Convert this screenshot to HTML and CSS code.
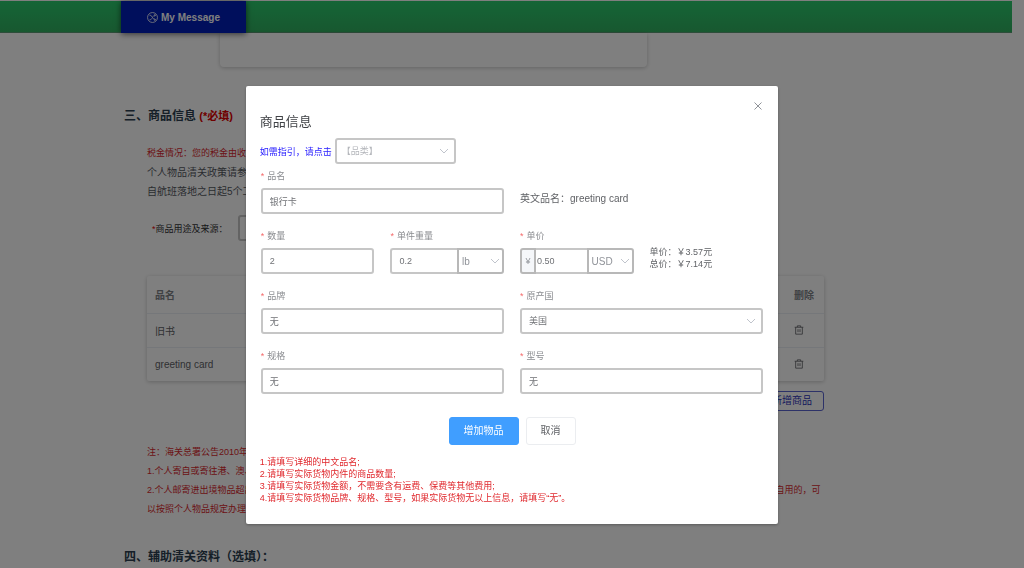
FILE: index.html
```html
<!DOCTYPE html>
<html lang="zh-CN">
<head>
<meta charset="utf-8">
<meta name="viewport" content="width=device-width, initial-scale=1">
<title>商品信息</title>
<link rel="stylesheet" href="styles.css">
</head>
<body>
<svg class="sprite" aria-hidden="true">
  <symbol id="chevron" viewBox="0 0 10 10"><path d="M1 3l4 4 4-4" fill="none" stroke="currentColor"/></symbol>
  <symbol id="trash" viewBox="0 0 12 12"><path d="M.8 2.700h10.400M4 2.500V1h4v1.500M2 2.700v8.300h8V2.700M4.800 5v3.500M7.200 5v3.500" fill="none" stroke="currentColor"/></symbol>
</svg>
<div class="page">
  <header class="topbar">
    <a class="tab" href="#">
      <svg class="tab-icon" viewBox="0 0 12 12" aria-hidden="true"><g fill="none" stroke="currentColor" stroke-width=".9"><circle cx="6" cy="6" r="5.400"/><path d="M2.800 3.600h1.400l3.600 4.800h1.400M8 7.200l1.300 1.200L8 9.500M2.800 8.400h1.400l1.200-1.600M6.400 5.200l1.400-1.600h1.400M8 2.500l1.300 1.100L8 4.800"/></g></svg>
      My Message
    </a>
  </header>
  <main class="main">
    <div class="card"></div>
    <h2 class="section-title">三、商品信息 <span class="required">(*必填)</span></h2>
    <div class="section">
      <p class="tax">税金情况：您的税金由收件人承担</p>
      <p class="policy">个人物品清关政策请参考海关公告</p>
      <p class="policy">自航班落地之日起5个工作日内</p>
      <div class="purpose">
        <label for="purpose"><span class="star">*</span>商品用途及来源：</label>
        <input class="control purpose-input" id="purpose" type="text">
      </div>
      <table class="goods">
        <thead><tr><th>品名</th><th class="remove">删除</th></tr></thead>
        <tbody>
          <tr><td>旧书</td><td class="remove"><button class="icon-button" aria-label="删除旧书"><svg viewBox="0 0 12 12"><use href="#trash"/></svg></button></td></tr>
          <tr><td>greeting card</td><td class="remove"><button class="icon-button" aria-label="删除 greeting card"><svg viewBox="0 0 12 12"><use href="#trash"/></svg></button></td></tr>
        </tbody>
      </table>
      <button class="add">新增商品</button>
      <div class="rules">
        <p>注：海关总署公告2010年第43号</p>
        <p>1.个人寄自或寄往港、澳、台地区的物品</p>
        <p>2.个人邮寄进出境物品超出规定限值的，应办理退运手续或者按照货物规定办理通关手续。但邮包内仅一件物品且不可分割的，虽超出限值，经海关审核属个人自用的，可<br>以按照个人物品规定办理通关手续。</p>
      </div>
    </div>
    <h2 class="section-title">四、辅助清关资料（选填）：</h2>
  </main>
</div>

<div class="overlay">
  <div class="dialog" role="dialog" aria-modal="true" aria-labelledby="dialog-title">
    <button class="close" aria-label="关闭"><svg viewBox="0 0 10 10"><path d="M1.500 1.500l7 7M8.500 1.500l-7 7" fill="none" stroke="currentColor"/></svg></button>
    <h1 class="dialog-title" id="dialog-title">商品信息</h1>
    <div class="guide">
      <a href="#">如需指引，请点击</a>
      <div class="select guide-select">
        <select class="control placeholder" aria-label="品类"><option>【品类】</option></select>
        <svg class="chevron"><use href="#chevron"/></svg>
      </div>
    </div>
    <form class="form">
      <div class="field">
        <label for="name"><span class="star">*</span>品名</label>
        <input class="control" id="name" type="text" value="银行卡">
      </div>
      <p class="english">英文品名：greeting card</p>
      <div class="pair">
        <div class="field">
          <label for="count"><span class="star">*</span>数量</label>
          <input class="control" id="count" type="text" value="2">
        </div>
        <div class="field">
          <label for="weight"><span class="star">*</span>单件重量</label>
          <div class="group">
            <input class="control" id="weight" type="text" value="0.2">
            <div class="select unit">
              <select class="control" aria-label="重量单位"><option>lb</option></select>
              <svg class="chevron"><use href="#chevron"/></svg>
            </div>
          </div>
        </div>
      </div>
      <div class="pair">
        <div class="field">
          <label for="price"><span class="star">*</span>单价</label>
          <div class="group price">
            <span class="prefix">¥</span>
            <input class="control" id="price" type="text" value="0.50">
            <div class="select unit">
              <select class="control" aria-label="货币"><option>USD</option></select>
              <svg class="chevron"><use href="#chevron"/></svg>
            </div>
          </div>
        </div>
        <div class="totals">
          <p>单价：￥3.57元</p>
          <p>总价：￥7.14元</p>
        </div>
      </div>
      <div class="field">
        <label for="brand"><span class="star">*</span>品牌</label>
        <input class="control" id="brand" type="text" value="无">
      </div>
      <div class="field">
        <label for="origin"><span class="star">*</span>原产国</label>
        <div class="select">
          <select class="control" id="origin"><option>美国</option></select>
          <svg class="chevron"><use href="#chevron"/></svg>
        </div>
      </div>
      <div class="field">
        <label for="spec"><span class="star">*</span>规格</label>
        <input class="control" id="spec" type="text" value="无">
      </div>
      <div class="field">
        <label for="model"><span class="star">*</span>型号</label>
        <input class="control" id="model" type="text" value="无">
      </div>
    </form>
    <div class="actions">
      <button class="button primary">增加物品</button>
      <button class="button">取消</button>
    </div>
    <div class="notes">
      <p>1.请填写详细的中文品名;</p>
      <p>2.请填写实际货物内件的商品数量;</p>
      <p>3.请填写实际货物金额，不需要含有运费、保费等其他费用;</p>
      <p>4.请填写实际货物品牌、规格、型号，如果实际货物无以上信息，请填写“无”。</p>
    </div>
  </div>
</div>
</body>
</html>
```

FILE: styles.css
```css
* {
  box-sizing: border-box;
}

body {
  margin: 0;
  height: 100vh;
  overflow: hidden;
  background: #fff;
  color: #303133;
  font-family: "Liberation Sans", "Noto Sans CJK SC", sans-serif;
  font-size: 9px;
}

p,
h1,
h2 {
  margin: 0;
}

button,
input,
select {
  font-family: inherit;
  font-size: inherit;
  margin: 0;
}

.sprite {
  position: absolute;
  width: 0;
  height: 0;
}

/* Page behind the dialog */
.page {
  padding-right: 12px;
}

.topbar {
  height: 33px;
  padding-left: 121px;
  border-top: 1px solid #fff;
  border-bottom: 1px solid #5a9a74;
  background: linear-gradient(#2bcb6d, #30b060);
}

.tab {
  display: flex;
  align-items: center;
  justify-content: center;
  gap: 3px;
  position: relative;
  width: 125px;
  height: 32px;
  background: #001eb8;
  box-shadow: 0 1px 6px rgba(0, 0, 0, 0.6);
  color: #fff;
  font-size: 10px;
  font-weight: bold;
  text-decoration: none;
}

.tab-icon {
  width: 11px;
  height: 11px;
}

.main {
  max-width: 764px;
  margin: 0 auto;
}

.card {
  width: 427px;
  height: 34px;
  margin-left: 96px;
  border-radius: 0 0 4px 4px;
  box-shadow: 0 1px 4px rgba(0, 0, 0, 0.22);
}

.section-title {
  margin-top: 39px;
  color: #2c3e50;
  font-size: 12px;
  line-height: 20px;
}

.required {
  color: #e00000;
  font-size: 11px;
}

.section {
  padding: 18px 64px 0 23px;
}

.tax,
.policy,
.rules {
  line-height: 19px;
  white-space: nowrap;
}

.tax,
.rules {
  color: #d8282d;
}

.policy {
  color: #55595f;
  font-size: 10px;
}

.star {
  color: #f56c6c;
}

.purpose {
  display: flex;
  align-items: center;
  gap: 10px;
  margin: 14px 0 35px;
  padding-left: 5px;
}

.purpose .star {
  color: #e00000;
}

.control.purpose-input {
  width: 240px;
}

.goods {
  width: 100%;
  border-collapse: collapse;
  border-radius: 2px;
  box-shadow: 0 1px 4px rgba(0, 0, 0, 0.22);
  color: #606266;
  font-size: 10px;
  text-align: left;
}

.goods th,
.goods td {
  height: 34px;
  padding: 0 8px;
}

.goods th {
  height: 37px;
  color: #808388;
}

.goods tbody tr {
  border-top: 1px solid #ebeef5;
}

.goods .remove {
  width: 38px;
}

.icon-button {
  display: block;
  width: 10px;
  height: 10px;
  padding: 0;
  border: 0;
  background: none;
  color: #606266;
}

.icon-button svg {
  display: block;
  width: 10px;
  height: 10px;
}

.add {
  display: block;
  height: 20px;
  margin: 10px 0 0 auto;
  padding: 0 11px;
  border: 1px solid #5a64d0;
  border-radius: 3px;
  background: #fff;
  color: #2a32b8;
  font-size: 10px;
  line-height: 16px;
}

.rules {
  margin-top: 32px;
}

.section + .section-title {
  margin-top: 28px;
}

/* Dialog */
.overlay {
  position: fixed;
  inset: 0;
  background: rgba(0, 0, 0, 0.5);
}

.dialog {
  position: relative;
  width: 52%;
  margin: 86px auto 0;
  padding: 26px 14px 20px;
  border-radius: 2px;
  background: #fff;
  box-shadow: 0 1px 3px rgba(0, 0, 0, 0.3);
}

.close {
  position: absolute;
  top: 15px;
  right: 15px;
  width: 10px;
  height: 10px;
  padding: 0;
  border: 0;
  background: none;
  color: #909399;
}

.close svg {
  display: block;
}

.dialog-title {
  color: #404246;
  font-size: 13px;
  font-weight: normal;
  line-height: 20px;
}

.guide {
  display: flex;
  align-items: center;
  gap: 3px;
  margin-top: 6px;
}

.guide a {
  color: #2a20ff;
  text-decoration: none;
}

.guide-select {
  width: 121px;
}

.control {
  display: block;
  width: 100%;
  height: 26px;
  padding: 0 7px;
  border: 2px solid #c6c6c6;
  border-radius: 3px;
  background: #fff;
  color: #707276;
}

.select {
  position: relative;
}

.select .control {
  appearance: none;
}

.select .control.placeholder {
  padding-left: 5px;
  color: #b4b6bb;
}

.chevron {
  position: absolute;
  top: 8px;
  right: 7px;
  width: 10px;
  height: 10px;
  color: #c0c4cc;
  pointer-events: none;
}

.form {
  display: grid;
  grid-template-columns: 1fr 1fr;
  gap: 10px 16px;
  padding: 0 1px;
}

.pair {
  display: grid;
  grid-template-columns: 1fr 1fr;
  gap: 16px;
}

.field label {
  display: block;
  color: #8a8c90;
  line-height: 24px;
}

.field .star {
  margin-right: 3px;
}

.english {
  align-self: end;
  color: #606266;
  font-size: 10px;
  line-height: 30px;
}

.group {
  display: flex;
}

.group > .control {
  flex: 1;
  min-width: 0;
  border-right: 0;
  border-radius: 3px 0 0 3px;
}

.group.price > .control {
  padding: 0 1px;
  border-left: 0;
  border-radius: 0;
}

.unit {
  width: 47px;
}

.unit .control {
  padding: 0 3px;
  border-color: #b8b8b8;
  border-radius: 0 3px 3px 0;
  color: #909399;
  font-size: 10px;
}

.unit .chevron {
  right: 4px;
}

.prefix {
  display: flex;
  align-items: center;
  justify-content: center;
  width: 16px;
  border: 2px solid #b8b8b8;
  border-radius: 3px 0 0 3px;
  background: #f5f7fa;
  color: #909399;
}

.totals {
  align-self: end;
  padding-bottom: 4px;
  color: #606266;
  line-height: 12px;
}

.actions {
  display: flex;
  justify-content: center;
  gap: 7px;
  margin-top: 23px;
}

.button {
  height: 28px;
  padding: 0 14px;
  border: 1px solid #ebedf0;
  border-radius: 3px;
  background: #fff;
  color: #606266;
  font-size: 10px;
  line-height: 24px;
}

.button.primary {
  border-color: #409eff;
  background: #409eff;
  color: #fff;
}

.notes {
  margin-top: 11px;
  color: #e0282d;
  line-height: 12px;
}
```
